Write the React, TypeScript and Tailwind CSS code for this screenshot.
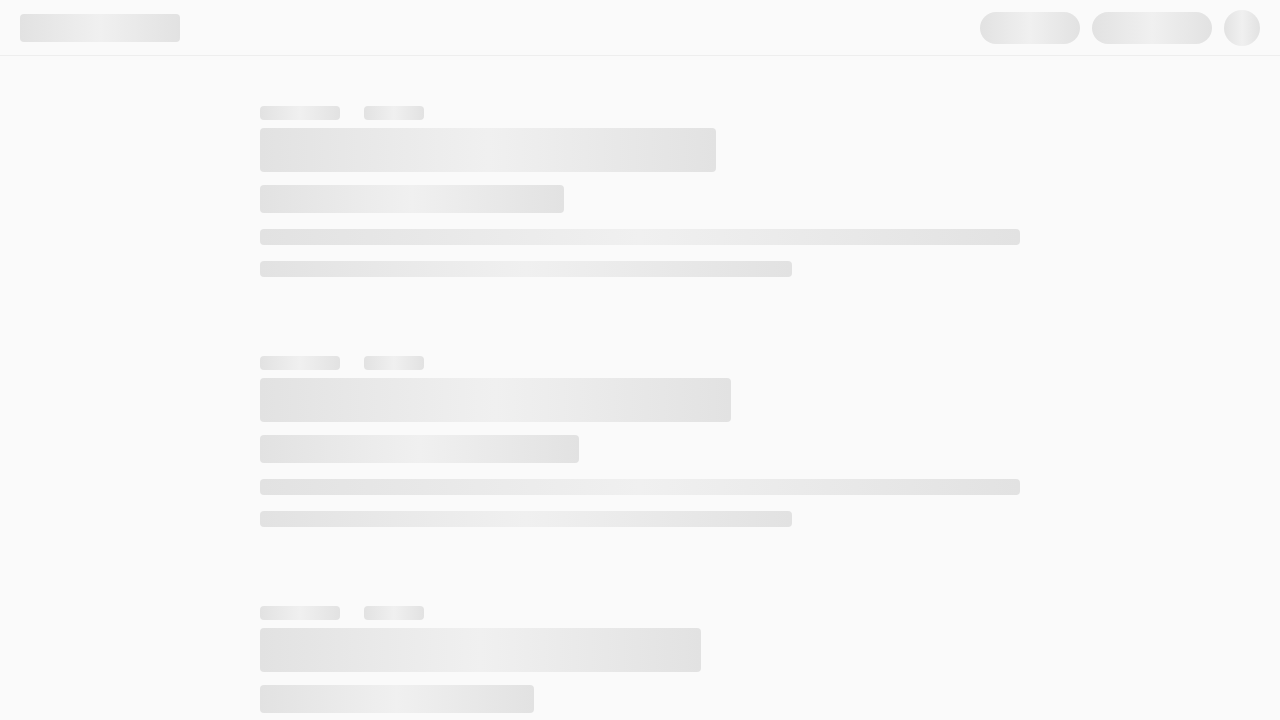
const SHIMMER = "bg-linear-to-r from-[#e2e2e2] via-[#f0f0f0] to-[#e2e2e2]";

const BLOCKS = [
  { title: 456, sub: 304 },
  { title: 471, sub: 319 },
  { title: 441, sub: 274 },
];

function Bone({ className, width }: { className: string; width?: number }) {
  return <div className={`${SHIMMER} ${className}`} style={width ? { width } : undefined} />;
}

function PostSkeleton({ title, sub }: { title: number; sub: number }) {
  return (
    <div className="flex flex-col">
      <div className="flex gap-6">
        <Bone className="h-[14px] w-20 rounded" />
        <Bone className="h-[14px] w-[60px] rounded" />
      </div>
      <Bone className="mt-2 h-11 rounded" width={title} />
      <Bone className="mt-[13px] h-7 rounded" width={sub} />
      <Bone className="mt-4 h-4 w-full rounded" />
      <Bone className="mt-4 h-4 w-[70%] rounded" />
    </div>
  );
}

export default function App() {
  return (
    <div className="min-h-screen bg-[#fafafa] font-['Inter',sans-serif]">
      <header className="flex h-14 items-center justify-between border-b border-[#eeeeee] px-5">
        <Bone className="h-7 w-40 rounded" />
        <div className="flex items-center gap-3">
          <Bone className="h-8 w-[100px] rounded-full" />
          <Bone className="h-8 w-[120px] rounded-full" />
          <Bone className="h-9 w-9 rounded-full" />
        </div>
      </header>
      <main className="mx-auto flex max-w-[760px] flex-col gap-[79px] pt-[50px]">
        {BLOCKS.map((b, i) => (
          <PostSkeleton key={i} title={b.title} sub={b.sub} />
        ))}
      </main>
    </div>
  );
}
